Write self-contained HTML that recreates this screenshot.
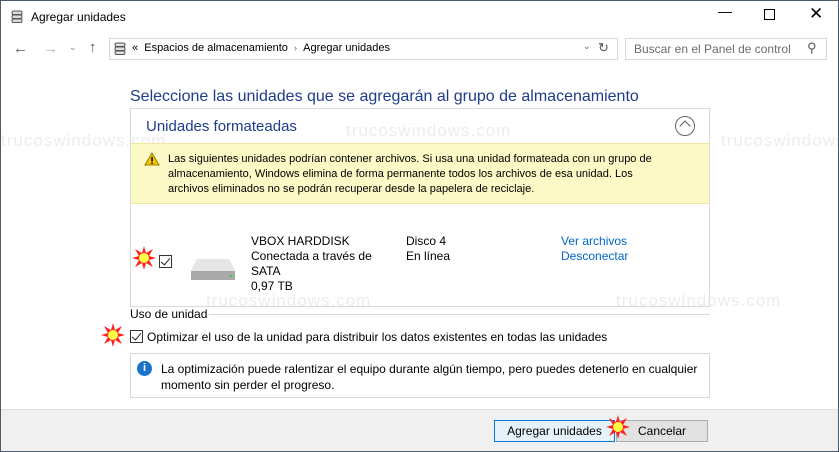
<!DOCTYPE html>
<html><head><meta charset="utf-8"><style>
*{margin:0;padding:0;box-sizing:border-box}
body{width:839px;height:452px;overflow:hidden;font-family:"Liberation Sans",sans-serif;font-size:12px;color:#000;background:#fff;position:relative}
.win{position:absolute;left:0;top:0;width:839px;height:452px;border:1px solid #4a5a6a;overflow:hidden}
.a{position:absolute;white-space:nowrap}
.wm{position:absolute;color:#ececec;font-size:17px;letter-spacing:1px}
.cb{position:absolute;width:13px;height:13px;border:1px solid #333;background:#fff}
.cb:after{content:"";position:absolute;left:3px;top:0px;width:4px;height:8px;border:solid #222;border-width:0 1.5px 1.5px 0;transform:rotate(40deg)}
.btn{position:absolute;height:22px;border:1px solid #adadad;background:#e1e1e1;text-align:center;line-height:20px;font-size:12px}
</style></head><body><div class="win">
<svg class="a" style="left:10px;top:9px" width="12" height="14"><rect x="1" y="1" width="10" height="3.5" rx="1.5" fill="#ddd" stroke="#555"/><rect x="1" y="5" width="10" height="3.5" rx="1.5" fill="#ddd" stroke="#555"/><rect x="1" y="9" width="10" height="3.5" rx="1.5" fill="#ddd" stroke="#555"/></svg>
<div class="a" style="left:30px;top:9px;font-size:12px">Agregar unidades</div>
<div class="a" style="left:717px;top:2px;font-size:14px">&#8212;</div>
<div class="a" style="left:763px;top:8px;width:11px;height:11px;border:1px solid #000"></div>
<div class="a" style="left:808px;top:3px;font-size:17px">✕</div>
<div class="a" style="left:12px;top:39px;font-size:15px;color:#555">←</div>
<div class="a" style="left:42px;top:39px;font-size:15px;color:#bbb">→</div>
<div class="a" style="left:68px;top:41px;font-size:9px;color:#888">⌄</div>
<div class="a" style="left:88px;top:38px;font-size:15px;color:#555">↑</div>
<div class="a" style="left:108px;top:37px;width:509px;height:22px;border:1px solid #d9d9d9"></div>
<svg class="a" style="left:113px;top:41px" width="12" height="14"><rect x="1" y="1" width="10" height="3.5" rx="1.5" fill="#ddd" stroke="#555"/><rect x="1" y="5" width="10" height="3.5" rx="1.5" fill="#ddd" stroke="#555"/><rect x="1" y="9" width="10" height="3.5" rx="1.5" fill="#ddd" stroke="#555"/></svg>
<div class="a" style="left:131px;top:41px;font-size:11px">«&nbsp;&nbsp;Espacios de almacenamiento&nbsp;&nbsp;<span style="font-size:9px;color:#666">›</span>&nbsp;&nbsp;Agregar unidades</div>
<div class="a" style="left:582px;top:40px;font-size:9px;color:#666">⌄</div>
<div class="a" style="left:597px;top:39px;font-size:13px;color:#555">↻</div>
<div class="a" style="left:624px;top:37px;width:202px;height:22px;border:1px solid #d9d9d9"></div>
<div class="a" style="left:633px;top:41px;color:#6d6d6d">Buscar en el Panel de control</div>
<div class="a" style="left:806px;top:39px;font-size:13px;color:#555">⚲</div>
<div class="wm" style="left:0;top:130px">trucoswindows.com</div>
<div class="wm" style="left:345px;top:120px">trucoswindows.com</div>
<div class="wm" style="left:720px;top:130px">trucoswindows</div>
<div class="wm" style="left:205px;top:290px">trucoswindows.com</div>
<div class="wm" style="left:615px;top:290px">trucoswindows.com</div>
<div class="a" style="left:129px;top:87px;font-size:16px;color:#1e3c8c">Seleccione las unidades que se agregarán al grupo de almacenamiento</div>
<div class="a" style="left:129px;top:107px;width:580px;height:199px;border:1px solid #d9d9d9"></div>
<div class="a" style="left:145px;top:117px;font-size:15px;color:#1e3c8c">Unidades formateadas</div>
<div class="a" style="left:674px;top:115px;width:20px;height:20px;border:1px solid #666;border-radius:50%"></div>
<div class="a" style="left:680px;top:121px;width:8px;height:8px;border:solid #555;border-width:1px 0 0 1px;transform:rotate(45deg)"></div>
<div class="a" style="left:130px;top:142px;width:578px;height:61px;background:#fcf9c6;border-top:1px solid #ece79a;border-bottom:1px solid #ece79a"></div>
<svg class="a" style="left:143px;top:151px" width="16" height="14"><polygon points="8,1 15,13 1,13" fill="#f4c400" stroke="#9a7a00"/><rect x="7.3" y="5" width="1.5" height="4.5" fill="#000"/><rect x="7.3" y="10.5" width="1.5" height="1.5" fill="#000"/></svg>
<div class="a" style="left:167px;top:151px;line-height:15px;font-size:11px">Las siguientes unidades podrían contener archivos. Si usa una unidad formateada con un grupo de<br>almacenamiento, Windows elimina de forma permanente todos los archivos de esa unidad. Los<br>archivos eliminados no se podrán recuperar desde la papelera de reciclaje.</div>
<div class="cb" style="left:158px;top:254px"></div>
<svg class="a" style="left:188px;top:256px" width="48" height="26"><path d="M8 2 H40 L46 14 V22 H2 V14 Z" fill="#d0d0d0"/><rect x="2" y="14" width="44" height="9" fill="#a9a9a9"/><path d="M8 2 H40 L46 14 H2 Z" fill="#e6e6e6"/><rect x="41" y="18" width="2" height="2" fill="#3c3"/></svg>
<div class="a" style="left:250px;top:233px;line-height:15px">VBOX HARDDISK<br>Conectada a través de<br>SATA<br>0,97 TB</div>
<div class="a" style="left:405px;top:233px;line-height:15px">Disco 4<br>En línea</div>
<div class="a" style="left:560px;top:233px;line-height:15px;color:#0066cc">Ver archivos<br>Desconectar</div>
<div class="a" style="left:129px;top:306px">Uso de unidad</div>
<div class="a" style="left:208px;top:313px;width:501px;height:1px;background:#d9d9d9"></div>
<div class="cb" style="left:129px;top:329px"></div>
<div class="a" style="left:146px;top:329px">Optimizar el uso de la unidad para distribuir los datos existentes en todas las unidades</div>
<div class="a" style="left:129px;top:352px;width:580px;height:45px;border:1px solid #d9d9d9"></div>
<div class="a" style="left:136px;top:360px;width:15px;height:15px;border-radius:50%;background:#1a73c8;color:#fff;font-size:11px;font-weight:bold;text-align:center;line-height:15px">i</div>
<div class="a" style="left:160px;top:360px;line-height:16px">La optimización puede ralentizar el equipo durante algún tiempo, pero puedes detenerlo en cualquier<br>momento sin perder el progreso.</div>
<div class="a" style="left:0;top:408px;width:837px;height:43px;background:#f0f0f0;border-top:1px solid #dfdfdf"></div>
<div class="btn" style="left:493px;top:419px;width:121px;border-color:#0078d7;background:#e5f1fb">Agregar unidades</div>
<div class="btn" style="left:615px;top:419px;width:92px">Cancelar</div>
<svg class="a" style="left:131px;top:245px" width="24" height="24"><polygon points="12,0 14,7 21,3 17,10 24,12 17,14 21,21 14,17 12,24 10,17 3,21 7,14 0,12 7,10 3,3 10,7" fill="#f22"/><circle cx="12" cy="12" r="5" fill="#ff4"/></svg>
<svg class="a" style="left:100px;top:322px" width="24" height="24"><polygon points="12,0 14,7 21,3 17,10 24,12 17,14 21,21 14,17 12,24 10,17 3,21 7,14 0,12 7,10 3,3 10,7" fill="#f22"/><circle cx="12" cy="12" r="5" fill="#ff4"/></svg>
<svg class="a" style="left:605px;top:414px" width="24" height="24"><polygon points="12,0 14,7 21,3 17,10 24,12 17,14 21,21 14,17 12,24 10,17 3,21 7,14 0,12 7,10 3,3 10,7" fill="#f22"/><circle cx="12" cy="12" r="5" fill="#ff4"/></svg>
</div></body></html>
